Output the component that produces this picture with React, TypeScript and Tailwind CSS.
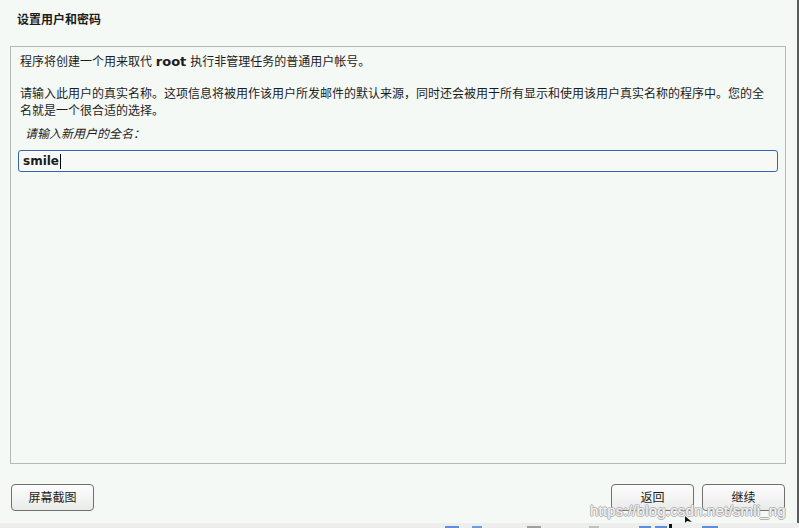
import React from 'react';

const font = { fontFamily: '"DejaVu Sans", "Noto Sans CJK SC", sans-serif' };

const Button: React.FC<{ label: string }> = ({ label }) => (
  <button className="w-[83px] h-[27px] rounded-[4px] border border-[#707070] bg-gradient-to-b from-[#fdfdfd] to-[#e9ebe9] text-[12px] leading-[14px] text-[#1a1a1a] flex items-center justify-center">
    {label}
  </button>
);

const App: React.FC = () => {
  return (
    <div className="w-[799px] h-[528px] overflow-hidden bg-[#eeeeee] text-[#1c1c1c]" style={font}>
      <div className="relative w-[799px] h-[523px] bg-[#f5f9f6] border-r-2 border-[#5a5a5a] flex flex-col">
        {/* 标题 */}
        <div className="h-[46px] pl-[17px] pt-[12px] text-[12px] font-bold leading-[16px]">设置用户和密码</div>

        {/* 主面板 */}
        <div className="ml-[10px] w-[776px] h-[418px] border border-[#b6bab6] bg-[#f5f9f6] pl-[9px] pr-[8px] pt-[7px]">
          <p className="text-[12px] leading-[16px]">
            程序将创建一个用来取代 <span className="font-bold text-[13px]">root</span> 执行非管理任务的普通用户帐号。
          </p>
          <p className="mt-[16px] text-[12px] leading-[17px]">
            请输入此用户的真实名称。这项信息将被用作该用户所发邮件的默认来源，同时还会被用于所有显示和使用该用户真实名称的程序中。您的全
            <br />
            名就是一个很合适的选择。
          </p>
          <p className="mt-[6px] pl-[5px] text-[12px] leading-[16px] italic">请输入新用户的全名：</p>
          <div className="mt-[8px] -ml-[2px] w-[760px] h-[22px] rounded-[3px] border border-[#3564b4] bg-[#f7f9f7] flex items-center pl-[4px]">
            <span className="text-[12px] font-bold">smile</span>
            <span className="w-px h-[15px] bg-black ml-[1px]" />
          </div>
        </div>

        {/* 按钮行 */}
        <div className="mt-[20px] pl-[11px] pr-[12px] flex items-center">
          <Button label="屏幕截图" />
          <div className="flex-1" />
          <Button label="返回" />
          <div className="w-[8px]" />
          <Button label="继续" />
        </div>

        {/* 水印 */}
        <div
          className="absolute left-[590px] top-[504px] text-[15px] leading-[14px] text-[#f2f2f2] tracking-[0.2px]"
          style={{
            fontFamily: '"Liberation Sans", Arial, sans-serif',
            textShadow: '1px 0 0 #b4b4b4, -1px 0 0 #b4b4b4, 0 1px 0 #b4b4b4, 0 -1px 0 #b4b4b4',
          }}
        >
          https://blog.csdn.net/smli_ng
        </div>

        {/* 鼠标 */}
        <svg className="absolute left-[685px] top-[516px]" width="8" height="8" viewBox="0 0 8 8">
          <path d="M0 0 L0 7 L2 5 L7 6 Z" fill="#111" />
        </svg>
      </div>

      {/* 底部任务栏残影 */}
      <div className="h-[5px] flex items-end">
        <div className="ml-[445px] w-[14px] h-[2px] bg-[#5b8fd6]" />
        <div className="ml-[13px] w-[10px] h-[2px] bg-[#6d9ad8]" />
        <div className="ml-[45px] w-[14px] h-[2px] bg-[#a0a0a0]" />
        <div className="ml-[48px] w-[10px] h-[2px] bg-[#c0c0c0]" />
        <div className="ml-[40px] w-[12px] h-[2px] bg-[#5b8fd6]" />
        <div className="ml-[4px] w-[12px] h-[2px] bg-[#5b8fd6]" />
        <div className="ml-[2px] w-[3px] h-[4px] bg-[#111]" />
        <div className="ml-[30px] w-[16px] h-[2px] bg-[#5b8fd6]" />
      </div>
    </div>
  );
};

export default App;
